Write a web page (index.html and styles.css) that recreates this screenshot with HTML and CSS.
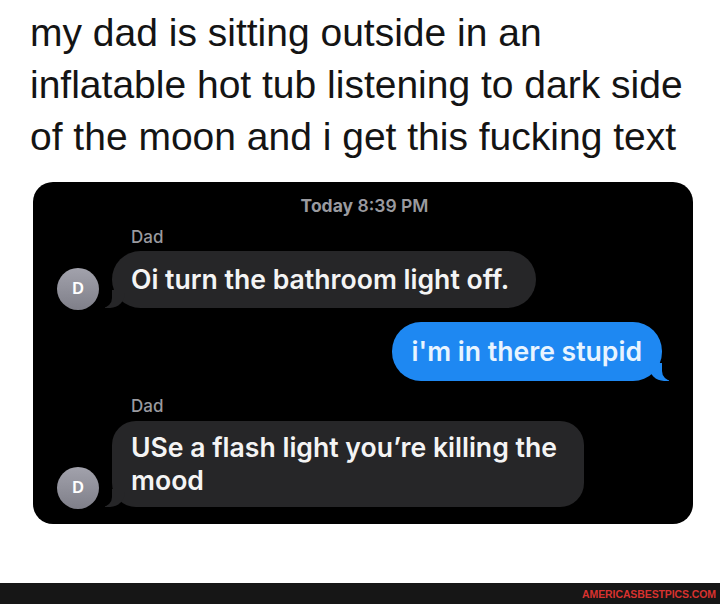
FILE: index.html
```html
<!DOCTYPE html>
<html>
<head>
<meta charset="utf-8">
<link rel="stylesheet" href="styles.css">
</head>
<body>
<div class="page">
  <div class="caption">my dad is sitting outside in an<br>inflatable hot tub listening to dark side<br>of the moon and i get this fucking text</div>
  <div class="card">
    <div class="stamp"><b>Today</b> 8:39 PM</div>
    <div class="sender">Dad</div>
    <div class="row first">
      <div class="avatar">D</div>
      <div class="bubble from">Oi turn the bathroom light off.</div>
    </div>
    <div class="row out">
      <div class="bubble to">i'm in there stupid</div>
    </div>
    <div class="sender second">Dad</div>
    <div class="row">
      <div class="avatar">D</div>
      <div class="bubble from multi">USe a flash light you’re killing the<br>mood</div>
    </div>
  </div>
  <div class="spacer"></div>
  <div class="footer"><span class="brand">AMERICASBESTPICS.COM</span></div>
</div>
</body>
</html>
```

FILE: styles.css
```css
html, body {
  margin: 0;
  padding: 0;
  background: #ffffff;
}
.page {
  width: 720px;
  height: 604px;
  display: flex;
  flex-direction: column;
  overflow: hidden;
}
.caption {
  font-family: "Liberation Sans", Arial, sans-serif;
  font-size: 39px;
  line-height: 52px;
  color: #141414;
  padding: 7px 0 0 30px;
}
.card {
  margin: 19px 0 0 33px;
  width: 660px;
  height: 342px;
  box-sizing: border-box;
  background: #000000;
  border-radius: 20px;
  padding: 14px 31px 0 24px;
  display: flex;
  flex-direction: column;
  font-family: Inter, "Liberation Sans", sans-serif;
}
.stamp {
  text-align: center;
  color: #9a9a9f;
  font-size: 17.5px;
  line-height: 20px;
  font-weight: 600;
  padding-left: 10px;
}
.stamp b {
  font-weight: 700;
}
.sender {
  color: #9a9a9f;
  font-size: 17px;
  line-height: 20px;
  font-weight: 500;
  margin: 11px 0 0 74px;
}
.sender.second {
  margin-top: 15px;
}
.row {
  display: flex;
  align-items: flex-end;
  gap: 13px;
  margin-top: 5px;
}
.row.first {
  margin-top: 4px;
}
.row.out {
  justify-content: flex-end;
  margin-top: 14px;
}
.avatar {
  width: 42px;
  height: 42px;
  border-radius: 50%;
  background: linear-gradient(#a2a2ac, #7f7f89);
  color: #ffffff;
  font-family: "Liberation Sans", Arial, sans-serif;
  font-weight: 700;
  font-size: 16px;
  display: flex;
  align-items: center;
  justify-content: center;
  flex: none;
  margin-bottom: -2px;
}
.bubble {
  position: relative;
  font-size: 26.6px;
  line-height: 33px;
  font-weight: 600;
  padding: 12px 27px 12px 19px;
  border-radius: 29px;
}
.bubble.from {
  background: #262628;
  color: #f4f4f4;
}
.bubble.multi {
  border-radius: 24px;
  padding: 10px 27px 10px 19px;
}
.bubble.to {
  background: #1e88f2;
  color: #e8f4ff;
  padding: 13px 20px 13px 20px;
}
.bubble.from::before {
  content: "";
  position: absolute;
  bottom: 0;
  left: -7px;
  width: 20px;
  height: 18px;
  background: #262628;
  border-bottom-right-radius: 15px;
}
.bubble.from::after {
  content: "";
  position: absolute;
  bottom: 0;
  left: -10px;
  width: 10px;
  height: 20px;
  background: #000000;
  border-bottom-right-radius: 10px;
}
.bubble.to::before {
  content: "";
  position: absolute;
  bottom: 0;
  right: -7px;
  width: 20px;
  height: 18px;
  background: #1e88f2;
  border-bottom-left-radius: 15px;
}
.bubble.to::after {
  content: "";
  position: absolute;
  bottom: 0;
  right: -10px;
  width: 10px;
  height: 20px;
  background: #000000;
  border-bottom-left-radius: 10px;
}
.spacer {
  flex: 1;
}
.footer {
  height: 21px;
  background: #161616;
  display: flex;
  align-items: center;
  justify-content: flex-end;
  padding-right: 4px;
}
.brand {
  font-family: "Liberation Sans", Arial, sans-serif;
  font-weight: 700;
  font-size: 10.5px;
  color: #d8322f;
  letter-spacing: -0.1px;
}
```
